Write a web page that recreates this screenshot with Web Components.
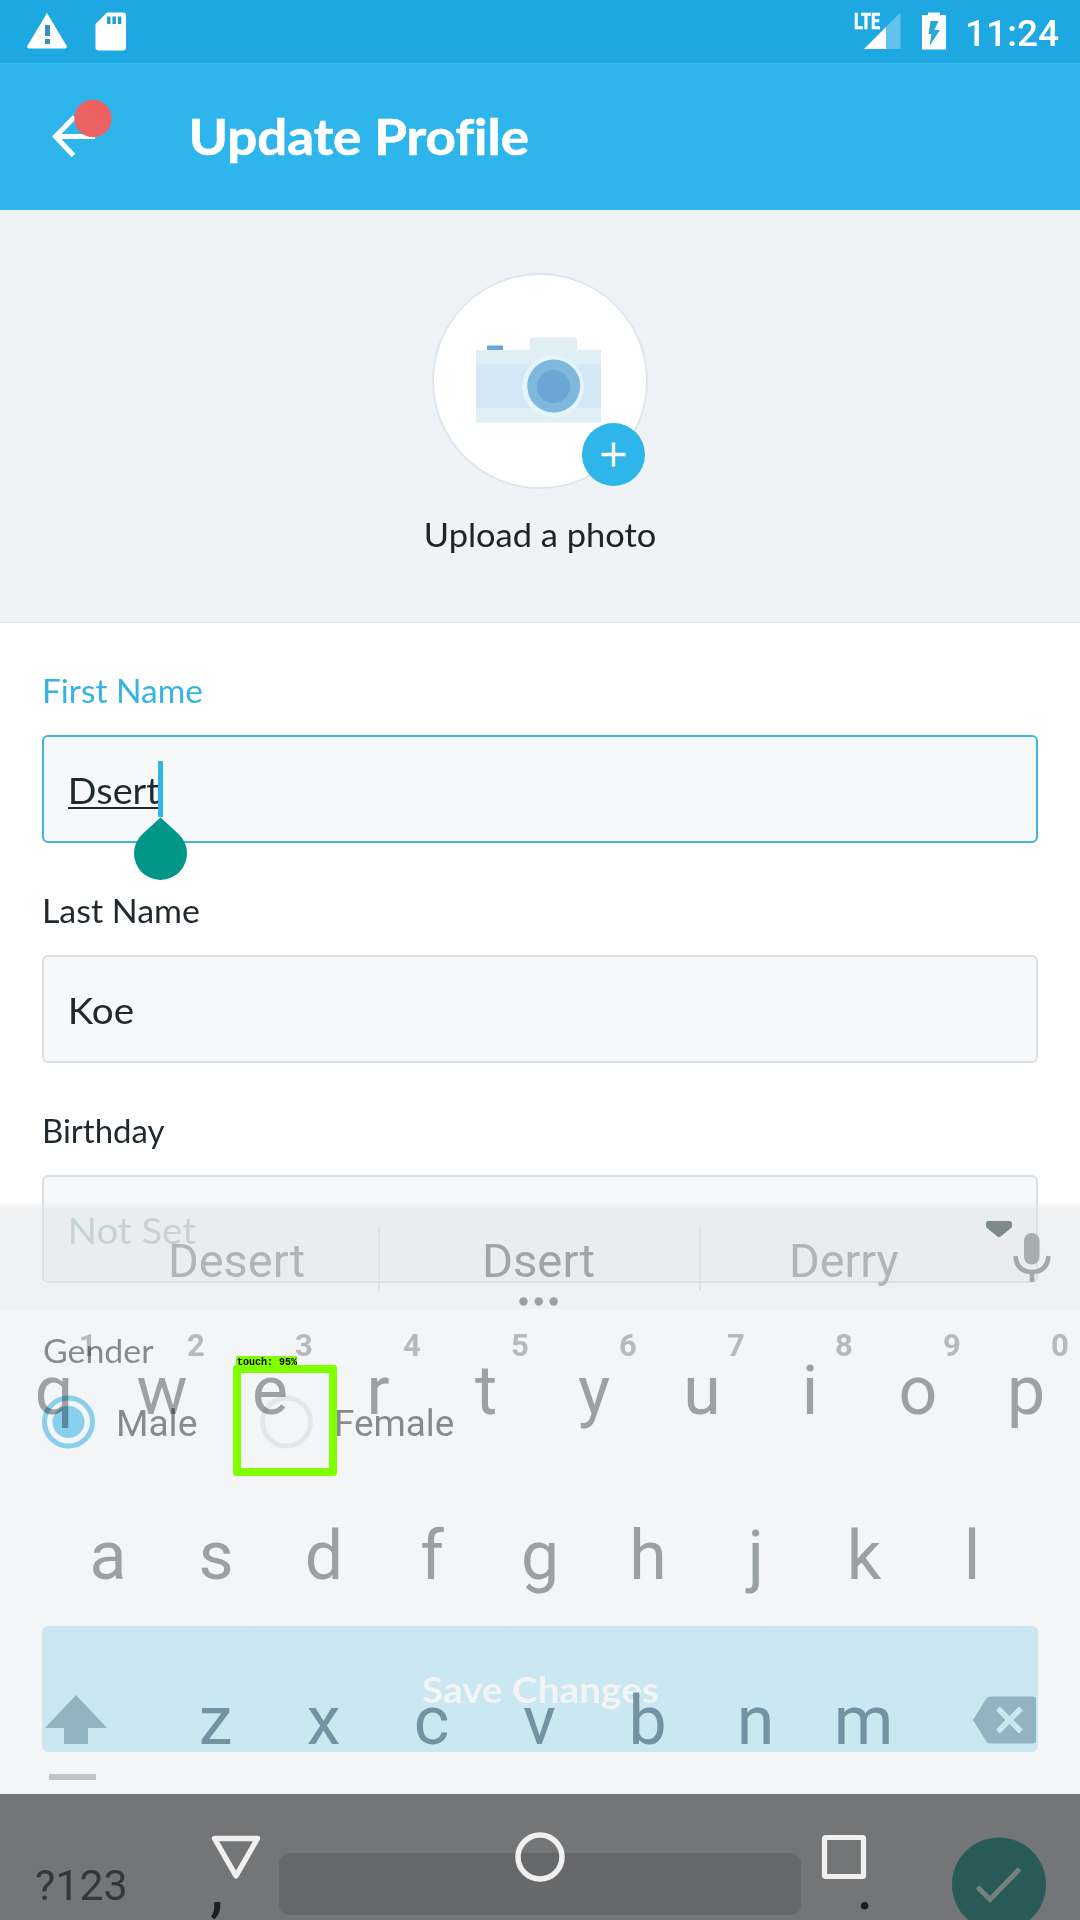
<!DOCTYPE html>
<html lang="en">
<head>
<meta charset="utf-8">
<title>Update Profile</title>
<style>
body{margin:0;background:#fff;font-family:Lato,"Open Sans",sans-serif;color:#1f292e}
</style>
</head>
<body>
<phone-screen>
  <status-bar></status-bar>
  <app-bar><ui-text w="335">Update Profile</ui-text></app-bar>
  <photo-picker><ui-text w="229">Upload a photo</ui-text></photo-picker>
  <profile-form>
    <form-field active><ui-text slot="label" w="158">First Name</ui-text><ui-text slot="value" w="89">Dsert</ui-text></form-field>
    <form-field><ui-text slot="label" w="155">Last Name</ui-text><ui-text slot="value" w="62">Koe</ui-text></form-field>
    <form-field empty><ui-text slot="label" w="121">Birthday</ui-text><ui-text slot="value" w="125">Not Set</ui-text></form-field>
    <gender-field><ui-text slot="label" w="110">Gender</ui-text>
      <radio-option checked><ui-text w="78">Male</ui-text></radio-option>
      <radio-option><ui-text w="117">Female</ui-text></radio-option>
    </gender-field>
    <save-button><ui-text w="236">Save Changes</ui-text></save-button>
  </profile-form>
  <soft-keyboard slot="overlay"></soft-keyboard>
  <nav-bar slot="overlay"></nav-bar>
  <touch-marker slot="overlay">touch: 95%</touch-marker>
</phone-screen>
<script>
const define = (name, html, ready) => customElements.define(name, class extends HTMLElement {
  connectedCallback() {
    if (this.shadowRoot) return;
    this.attachShadow({ mode: 'open' }).innerHTML = html;
    if (ready) ready(this, this.shadowRoot);
  }
});

define('phone-screen', `<style>
:host{display:flex;flex-direction:column;position:relative;width:1080px;height:1920px;overflow:hidden;background:#fff}
</style><slot></slot><slot name="overlay"></slot>`);

define('status-bar', `<style>
:host{display:flex;align-items:flex-start;height:63px;background:#1ea8e1;color:#fff;font-family:Roboto,sans-serif}
svg{display:block;flex:none}
.warn{margin:13px 0 0 27px}.sd{margin:12px 0 0 28px}
.sig{margin:12px 0 0 auto;overflow:visible}.bat{margin:12px 0 0 21px}
ui-text{margin:8px 21px 0 22px;font-size:37px;font-weight:500;line-height:52px}
</style>
<svg class="warn" width="40" height="36"><path fill="#fff" d="M20 0 40 33.500Q40 35.500 38 35.500H2Q0 35.500 0 33.500Z"/><path fill="#2f93bd" d="M18 12h5v11h-5zM18 26h5v5h-5z"/></svg>
<svg class="sd" width="31" height="39"><path fill="#fff" d="M12 .5H28Q31 .5 31 3.500V35.500Q31 38.500 28 38.500H3.500Q.5 38.500 .5 35.500V12Z"/><path fill="#1ea0d5" d="M12 4.500h3.500v7.500H12zM17.400 4.500h3.500v7.500h-3.500zM22.800 4.500h3.500v7.500h-3.500z"/></svg>
<svg class="sig" width="46" height="38"><path fill="#62c2ea" d="M31 15 45.500.500V37H31z"/><path fill="#fff" d="M9 37 31 15V37Z"/><text x="-1" y="17" font-family="Roboto" font-weight="700" font-size="22" textLength="26" lengthAdjust="spacingAndGlyphs" fill="#fff" stroke="#fff" stroke-width=".6">LTE</text></svg>
<svg class="bat" width="24" height="38"><path fill="#fff" d="M6 .5H18V3H24V37.500H0V3H6Z"/><path fill="#27a7dc" d="M8.500 9H16.500L12.500 18H18L7.500 34 9.500 22H6.500Z"/></svg>
<ui-text w="91">11:24</ui-text>`);

define('app-bar', `<style>
:host{display:flex;height:147px;background:#2eb5eb;color:#fff;font-size:49px;font-weight:700;line-height:78px}
svg{display:block;width:192px;height:147px;flex:none}
::slotted(*){margin-top:34px;-webkit-text-stroke:.6px #fff}
</style><svg><path d="M95 73.500H56M74.500 54 55.500 73.500 73.500 92.500" fill="none" stroke="#fff" stroke-width="5"/><circle cx="93" cy="55.500" r="18.700" fill="#ec6161"/></svg><slot></slot>`);

define('photo-picker', `<style>
:host{display:flex;flex-direction:column;align-items:center;box-sizing:border-box;height:413px;padding-top:63px;background:#eff3f7;border-bottom:1px solid #dfe5ea;color:#202428;font-size:32px;line-height:50px}
svg{display:block}
::slotted(*){margin-top:21px}
</style><svg width="216" height="216" viewBox="432 273 216 216">
<circle cx="540" cy="381" r="107" fill="#fff" stroke="#dbe5eb" stroke-width="1.800"/>
<path fill="#e0eff5" d="M530 350V339.500Q530 337.500 532 337.500H575Q577 337.500 577 339.500V350H601V422.500H476V350Z"/>
<path fill="#d2e9f5" d="M476 364H601V408H476Z"/><path fill="#6ba6d6" d="M487 345.500h16v4.500h-16z"/>
<circle cx="553" cy="386.500" r="31" fill="#e4f4fb"/><circle cx="553.700" cy="386" r="26.500" fill="#7fb8dd"/><circle cx="553.500" cy="386.500" r="16.500" fill="#6ba6d5"/>
<circle cx="613.500" cy="454.500" r="31.500" fill="#2eb5ea"/><path d="M601.500 454.500h24M613.500 442.500v24" stroke="#fff" stroke-width="3.400"/></svg><slot></slot>`);

define('profile-form', `<style>:host{display:flex;flex-direction:column;padding:37px 42px 0}</style><slot></slot>`);

define('form-field', `<style>
:host{display:flex;flex-direction:column;height:220px}
.label{padding:2px 0 0 2px;font-size:32px;line-height:58px;margin-bottom:15px}
.box{display:flex;align-items:center;position:relative;box-sizing:border-box;height:108px;padding:2px 0 0 27px;border:2px solid #d8e0e5;border-radius:6px;background:#f6f8fa;font-size:36px;line-height:50px}
:host([active]) .label{color:#35b4e2}
:host([active]) .box{border-color:#43b5d9}
:host([empty]) .value{color:#acc3cd}
.value{position:relative}
.caret{display:none}
:host([active]) .caret{display:block;position:absolute;left:-3px;top:-4px;overflow:visible}
</style><div class="label"><slot name="label"></slot></div><div class="box"><div class="value"><slot name="value"></slot>
<svg class="caret" width="120" height="130"><path d="M0 47h91" stroke="#1f292e" stroke-width="2"/><path fill="#30b5e6" d="M90 0h5v56h-5z"/><path fill="#009688" d="M92.500 56.500 110.500 73A26.500 26.500 0 1 1 74.500 73Z"/></svg></div></div>`);

define('gender-field', `<style>
:host{display:flex;flex-direction:column}
.label{padding:2px 0 0 2px;font-size:32px;line-height:58px;margin-bottom:15px}
.row{display:flex;gap:63px}
</style><div class="label"><slot name="label"></slot></div><div class="row"><slot></slot></div>`);

define('radio-option', `<style>
:host{display:flex;align-items:center;height:54px;gap:24px;font:36.500px/50px Roboto,sans-serif}
svg{display:block;flex:none}circle{fill:none;stroke:#dce3e9;stroke-width:5}
.dot{display:none}:host([checked]) circle{stroke:#2ab2ea}:host([checked]) .dot{display:block;fill:#2ab2ea;stroke:none}
::slotted(*){padding-top:3px}
</style><svg width="53" height="54"><circle cx="26.500" cy="27" r="24"/><circle class="dot" cx="26.500" cy="27" r="16"/></svg><slot></slot>`);

define('save-button', `<style>
:host{display:flex;align-items:center;justify-content:center;height:126px;margin-top:177px;border-radius:6px;background:#ade3f3;color:#fbfdfe;font-size:36px;font-weight:700;line-height:50px}
</style><slot></slot>`);

define('key-row', `<style>:host{display:flex;justify-content:center;align-items:center;height:165px;color:#9ba1a3;font:68px/80px Roboto,sans-serif}
.key{position:relative;width:108px;text-align:center}
.hint{position:absolute;left:68px;top:-20px;width:40px;font-size:31px;font-weight:700;line-height:30px;color:#bfc1c3}
</style>`, (el, root) => {
  [...el.getAttribute('keys')].forEach((k, i) => {
    const key = document.createElement('div');
    key.className = 'key';
    key.textContent = k;
    const hints = el.getAttribute('hints');
    if (hints) {
      const h = document.createElement('span');
      h.className = 'hint';
      h.textContent = hints[i];
      key.append(h);
    }
    root.append(key);
  });
});

define('soft-keyboard', `<style>
:host{display:flex;flex-direction:column;position:absolute;left:0;top:1202px;width:1080px;height:718px;font-family:Roboto,sans-serif}
svg{display:block;flex:none}
.strip{display:flex;position:relative;height:107px;background:linear-gradient(#eef0f200,#dee1e480 7px);color:#b1b5b8;font-size:46px;line-height:60px}
.strip ui-text{margin-top:29px}
.strip i{width:2px;height:64px;margin-top:25px;background:#dde1e4}
.tools{position:absolute;left:0;top:0}
.keys{margin-top:-1px;padding-top:1px;box-sizing:border-box;height:486px;background:linear-gradient(transparent 1px,#e9ebef80 1px)}
.keys key-row:first-child{margin-top:-1px;mix-blend-mode:multiply;color:#a2a8a9}
.last{display:flex;align-items:center;position:relative;box-sizing:border-box;height:156px;padding:9px 44px 0 45px}
.last key-row{flex:1;color:#7393a5;padding-right:3px;margin-left:2px}
.last svg{margin-top:-2px}
.last u{position:absolute;left:49px;top:136px;width:47px;height:6px;background:#c1c3c5}
.bottom{display:flex;align-items:flex-start;height:126px;margin-top:0;background:#747577;overflow:hidden;color:#191f22}
.sym{margin:67px 0 0 36px;font-size:42px;line-height:50px;color:#343638}
.comma{margin:58px 0 0 85px;font-size:68px;line-height:68px}
.space{width:522px;height:62px;margin:59px 0 0 58px;border-radius:10px;background:#67686a}
.dot{margin:58px 0 0 59px;font-size:68px;line-height:68px}
.go{margin:43px 0 0 84px}
</style>
<div class="strip"><ui-text w="133" style="margin-left:171px">Desert</ui-text><i style="margin-left:74px"></i>
<ui-text w="109" style="margin-left:105px;color:#a0a5a8">Dsert</ui-text><i style="margin-left:105px"></i><ui-text w="107" style="margin-left:91px">Derry</ui-text>
<svg class="tools" width="1080" height="107"><g fill="#9a9fa2"><circle cx="523.500" cy="99.500" r="4.200"/><circle cx="538.700" cy="99.500" r="4.200"/><circle cx="553.700" cy="99.500" r="4.200"/></g>
<path fill="#7d898d" stroke="#7d898d" stroke-width="5" stroke-linejoin="round" d="M988.500 21.500H1009.500V24L999 32.500 988.500 24Z"/>
<rect x="1024" y="31" width="15.500" height="31.500" rx="7.700" fill="#a5afb3"/><path d="M1015.500 54Q1017 70 1032 70 1047 70 1048.500 54M1032 70V80" fill="none" stroke="#a1aaaf" stroke-width="4.600"/></svg></div>
<div class="keys"><key-row keys="qwertyuiop" hints="1234567890"></key-row><key-row keys="asdfghjkl"></key-row>
<div class="last"><svg width="62" height="49"><path fill="#93b3c3" d="M31 0 62 33H43V49H19V33H0Z"/></svg><key-row keys="zxcvbnm"></key-row>
<svg width="63" height="48"><path fill="#93b3c3" d="M17 .5H60Q63 .5 63 3.500V44.500Q63 47.500 60 47.500H17Q14.500 47.500 13 45L0 24 13 3Q14.500 .5 17 .5Z"/><path d="M25 12.500 48 35.500M48 12.500 25 35.500" stroke="#cbe8f2" stroke-width="5.500"/></svg><u></u></div></div>
<div class="bottom"><ui-text class="sym" w="89">?123</ui-text><ui-text class="comma" w="11">,</ui-text><div class="space"></div><ui-text class="dot" w="8">.</ui-text>
<svg class="go" width="94" height="94"><circle cx="47" cy="47.500" r="47" fill="#285b57"/><path d="M25.500 50 38 62.500 67.500 32" fill="none" stroke="#77807f" stroke-width="5"/></svg></div>`);

define('nav-bar', `<style>
:host{display:flex;justify-content:space-between;align-items:center;position:absolute;left:0;top:1794px;box-sizing:border-box;width:1080px;height:126px;padding:0 206px}
svg{display:block;fill:none;stroke:#f0f0f1}
</style>
<svg width="60" height="60"><path d="M8.500 11.500H51.500L30 49Z" stroke-width="5.400" stroke-linejoin="round"/></svg>
<svg width="60" height="60"><circle cx="30" cy="30" r="22" stroke-width="5.500"/></svg>
<svg width="60" height="60"><rect x="10.500" y="10.500" width="39" height="39" rx="1" stroke-width="5.200"/></svg>`);

define('touch-marker', `<style>
:host{display:flex;flex-direction:column;align-items:flex-start;position:absolute;left:233px;top:1356px;font:700 10px/13px "Liberation Mono",monospace;color:#000}
.tag{position:relative;z-index:1;margin-left:3px;padding-left:1px;height:10px;width:60px;background:#80ff00;white-space:nowrap}
.box{box-sizing:border-box;width:104px;height:111px;margin-top:-1px;border:8px solid #80ff00;border-radius:3px}
</style><div class="tag"><slot></slot></div><div class="box"></div>`);

/* Single-line text whose ink spans exactly its w attribute, by horizontal scaling. */
define('ui-text', `<style>:host{display:block;flex:none;white-space:nowrap;font-variant-ligatures:none}span{display:inline-block;transform-origin:0 0}</style><span><slot></slot></span>`, (el, root) => {
  const w = +el.getAttribute('w'), text = el.textContent.trim(), cs = getComputedStyle(el);
  const ctx = document.createElement('canvas').getContext('2d');
  ctx.font = cs.fontWeight + ' ' + cs.fontSize + ' ' + cs.fontFamily;
  const m = ctx.measureText(text), span = root.querySelector('span');
  el.style.width = w + 'px';
  const s = text.length > 1 ? w / (m.actualBoundingBoxLeft + m.actualBoundingBoxRight) : 1;
  span.style.transform = 'translateX(' + m.actualBoundingBoxLeft * s + 'px) scaleX(' + s + ')';
});
</script>
</body>
</html>
